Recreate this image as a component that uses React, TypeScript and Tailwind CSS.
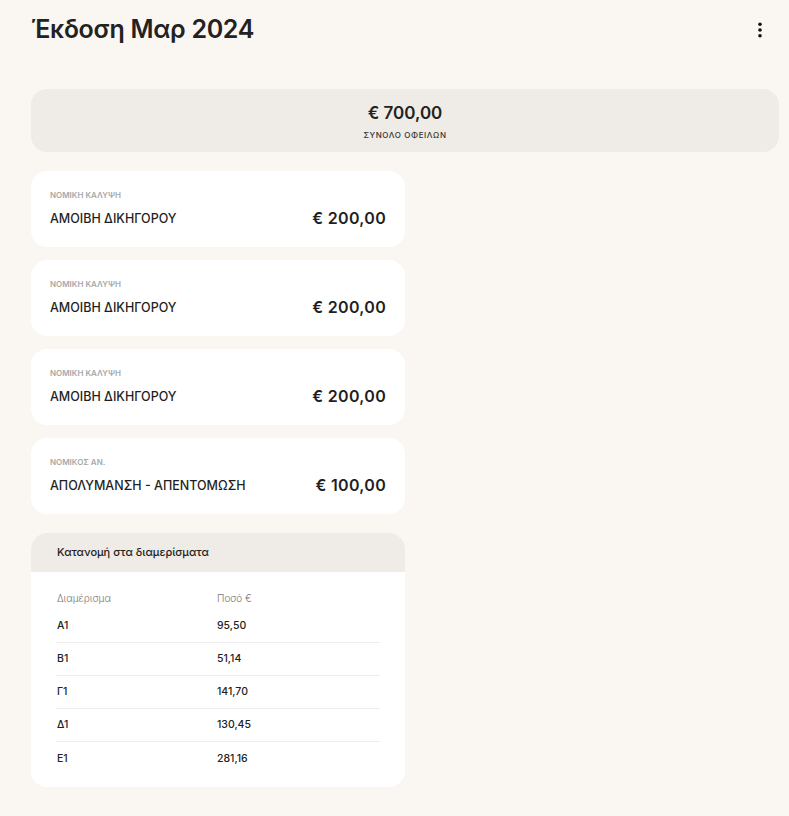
import React from "react";

const items = [
  { label: "ΝΟΜΙΚΗ ΚΑΛΥΨΗ", title: "ΑΜΟΙΒΗ ΔΙΚΗΓΟΡΟΥ", amount: "€ 200,00" },
  { label: "ΝΟΜΙΚΗ ΚΑΛΥΨΗ", title: "ΑΜΟΙΒΗ ΔΙΚΗΓΟΡΟΥ", amount: "€ 200,00" },
  { label: "ΝΟΜΙΚΗ ΚΑΛΥΨΗ", title: "ΑΜΟΙΒΗ ΔΙΚΗΓΟΡΟΥ", amount: "€ 200,00" },
  { label: "ΝΟΜΙΚΟΣ ΑΝ.", title: "ΑΠΟΛΥΜΑΝΣΗ - ΑΠΕΝΤΟΜΩΣΗ", amount: "€ 100,00" },
];

const rows = [
  ["Α1", "95,50"],
  ["Β1", "51,14"],
  ["Γ1", "141,70"],
  ["Δ1", "130,45"],
  ["Ε1", "281,16"],
];

export default function App() {
  return (
    <div
      className="min-h-[816px] bg-[#faf7f3] pl-[31px] pr-[10px] pb-[29px] text-[#1f1f1f]"
      style={{ fontFamily: "Inter, 'Noto Sans', sans-serif" }}
    >
      <div className="flex h-[60px] items-center justify-between pr-[16px]">
        <h1 className="text-[25px] font-semibold tracking-[-0.3px] text-[#222]">Έκδοση Μαρ 2024</h1>
        <svg width="6" height="16" viewBox="0 0 6 16">
          <circle cx="3" cy="2.2" r="1.8" fill="#111" />
          <circle cx="3" cy="8" r="1.8" fill="#111" />
          <circle cx="3" cy="13.8" r="1.8" fill="#111" />
        </svg>
      </div>

      <div className="mt-[29px] flex h-[63px] flex-col items-center rounded-[16px] bg-[#efebe6] pt-[14px]">
        <div className="text-[17px] font-semibold leading-[20px] text-[#222]">€ 700,00</div>
        <div className="mt-[6px] text-[8px] font-medium leading-[12px] tracking-[0.6px] text-[#333]">ΣΥΝΟΛΟ ΟΦΕΙΛΩΝ</div>
      </div>

      <div className="mt-[19px] flex w-[374px] flex-col gap-[13px]">
        {items.map((it, i) => (
          <div key={i} className="h-[76px] rounded-[16px] bg-white px-[19px] pt-[18px]">
            <div className="text-[8px] font-semibold leading-[12px] text-[#a8a8a8]">{it.label}</div>
            <div className="mt-[8px] flex h-[20px] items-center justify-between">
              <div className="text-[12.5px] font-medium text-[#1f1f1f]">{it.title}</div>
              <div className="mb-[3px] text-[16px] font-semibold tracking-[0.3px] text-[#1f1f1f]">{it.amount}</div>
            </div>
          </div>
        ))}
      </div>

      <div className="mt-[19px] w-[374px] overflow-hidden rounded-[16px] bg-white">
        <div className="flex h-[39px] items-center bg-[#efebe6] px-[26px] text-[11px] font-medium text-[#222]">
          Κατανομή στα διαμερίσματα
        </div>
        <div className="px-[25px] pb-[12px] pt-[15px]">
          <div className="flex h-[23px] items-center text-[10px] font-light text-[#777]">
            <div className="w-[161px] pl-[1px]">Διαμέρισμα</div>
            <div>Ποσό €</div>
          </div>
          {rows.map((r, i) => (
            <div
              key={i}
              className={`flex h-[33px] items-center text-[10.5px] font-medium text-[#222] ${
                i < rows.length - 1 ? "border-b border-[#ececec]" : ""
              }`}
            >
              <div className="w-[161px] pl-[1px]">{r[0]}</div>
              <div>{r[1]}</div>
            </div>
          ))}
        </div>
      </div>
    </div>
  );
}
